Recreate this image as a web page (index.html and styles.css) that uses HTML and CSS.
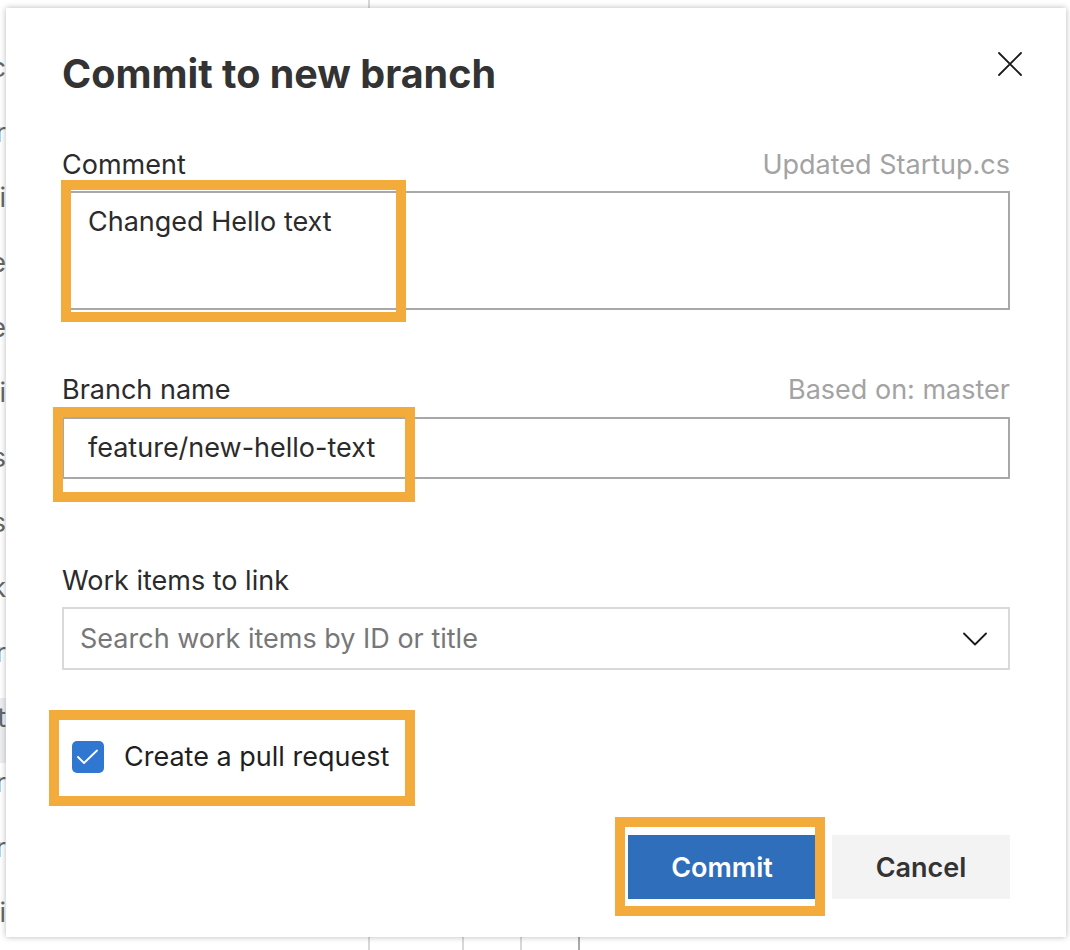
FILE: index.html
```html
<!DOCTYPE html>
<html lang="en">
<head>
<meta charset="utf-8">
<title>Commit to new branch</title>
<link rel="stylesheet" href="styles.css">
</head>
<body>
<div class="page">
  <div class="grid-lines">
    <div class="gcol gcol-1"></div>
    <div class="gcol gcol-2"></div>
    <div class="gcol gcol-3"></div>
    <div class="gcol gcol-4"></div>
  </div>
  <div class="side-text">
    <span class="frag">Sec</span>
    <span class="frag">Dir</span>
    <span class="frag">Acti</span>
    <span class="frag">Fle</span>
    <span class="frag">Ne</span>
    <span class="frag">Ui</span>
    <span class="frag">Ps</span>
    <span class="frag">Os</span>
    <span class="frag">Lk</span>
    <span class="frag">Fr</span>
    <span class="frag frag-sel">Ct</span>
    <span class="frag">Rr</span>
    <span class="frag">Or</span>
    <span class="frag">Si</span>
  </div>
</div>

<div class="dialog">
  <button class="close" aria-label="Close">
    <svg width="24" height="24" viewBox="0 0 24 24"><path d="M1 1 L23 23 M23 1 L1 23" stroke="#1a1a1a" stroke-width="1.8" fill="none" stroke-linecap="round"/></svg>
  </button>
  <h1 class="title">Commit to new branch</h1>

  <div class="field field-comment">
    <div class="label-row">
      <span class="label">Comment</span>
      <span class="hint">Updated Startup.cs</span>
    </div>
    <div class="textarea">Changed Hello text</div>
  </div>

  <div class="field field-branch">
    <div class="label-row">
      <span class="label">Branch name</span>
      <span class="hint">Based on: master</span>
    </div>
    <div class="input">feature/new-hello-text</div>
  </div>

  <div class="field field-work">
    <div class="label-row">
      <span class="label">Work items to link</span>
    </div>
    <div class="dropdown">
      <span class="placeholder">Search work items by ID or title</span>
      <svg class="chev" width="24" height="14" viewBox="0 0 24 14"><path d="M1 1.5 L12 12.5 L23 1.5" stroke="#1a1a1a" stroke-width="1.8" fill="none" stroke-linecap="round" stroke-linejoin="round"/></svg>
    </div>
  </div>

  <div class="check-row">
    <span class="checkbox">
      <svg width="32" height="32" viewBox="0 0 32 32"><path d="M6 16 L12 22 L25 9.5" stroke="#ffffff" stroke-width="1.8" fill="none" stroke-linecap="round" stroke-linejoin="round"/></svg>
    </span>
    <span class="check-label">Create a pull request</span>
  </div>

  <div class="actions">
    <button class="btn btn-primary">Commit</button>
    <button class="btn btn-secondary">Cancel</button>
  </div>

  <div class="mark mark-comment"></div>
  <div class="mark mark-branch"></div>
  <div class="mark mark-check"></div>
  <div class="mark mark-commit"></div>
</div>
</body>
</html>
```
FILE: styles.css
```css
* { box-sizing: border-box; }

html, body {
  margin: 0;
  padding: 0;
  width: 1070px;
  height: 950px;
  overflow: hidden;
  background: #ffffff;
  font-family: Inter, "Liberation Sans", Arial, sans-serif;
}

/* ---------- background page ---------- */
.page {
  position: relative;
  width: 1070px;
  height: 950px;
}

.grid-lines {
  display: flex;
  height: 950px;
}
.gcol { height: 100%; border-right: 2px solid #d8d8d8; }
.gcol-1 { width: 370px; }
.gcol-2 { width: 94px; border-image: linear-gradient(to bottom, transparent 900px, #d8d8d8 900px) 1; }
.gcol-3 { width: 58px; border-image: linear-gradient(to bottom, transparent 900px, #d8d8d8 900px) 1; }
.gcol-4 { width: 58px; border-image: linear-gradient(to bottom, transparent 900px, #a9a9a9 900px) 1; }

.side-text {
  position: absolute;
  left: 0;
  top: 0;
  display: flex;
  flex-direction: column;
  padding-top: 48px;
  width: 6px;
  overflow: hidden;
  direction: rtl;
}
.frag {
  display: block;
  height: 65px;
  line-height: 40px;
  font-size: 27px;
  color: #666;
  white-space: nowrap;
  text-align: right;
}
.frag-sel { background: #eceef2; }

/* ---------- dialog ---------- */
.dialog {
  position: absolute;
  left: 6px;
  top: 8px;
  width: 1060px;
  height: 929px;
  background: #ffffff;
  box-shadow: 0 0 6px rgba(0, 0, 0, 0.28);
  padding: 42px 56px 0 56px;
  display: flex;
  flex-direction: column;
  color: #323232;
}

.close {
  position: absolute;
  right: 44px;
  top: 44px;
  width: 24px;
  height: 24px;
  padding: 0;
  border: 0;
  background: transparent;
}
.close svg { display: block; }

.title {
  margin: 0;
  font-size: 39.5px;
  line-height: 48px;
  font-weight: 700;
  color: #333333;
}

.field { display: flex; flex-direction: column; }
.field-comment { margin-top: 51px; }
.field-branch { margin-top: 64px; }
.field-work { margin-top: 86px; }

.label-row {
  display: flex;
  justify-content: space-between;
  align-items: baseline;
  font-size: 27px;
  line-height: 32px;
}
.label { color: #2b2b2b; }
.hint { color: #a3a3a3; }

.textarea {
  margin-top: 10px;
  height: 119px;
  border: 2px solid #a8a8a8;
  padding: 13px 24px;
  font-size: 27px;
  line-height: 32px;
  color: #2b2b2b;
}

.input {
  margin-top: 11px;
  height: 62px;
  border: 2px solid #a8a8a8;
  padding: 13px 24px;
  font-size: 27px;
  line-height: 32px;
  color: #2b2b2b;
}

.dropdown {
  margin-top: 10px;
  height: 63px;
  border: 2px solid #d9d9d9;
  padding: 0 21px 0 16px;
  display: flex;
  align-items: center;
  justify-content: space-between;
  font-size: 27px;
  line-height: 32px;
}
.placeholder { color: #777777; }
.chev { display: block; }

.check-row {
  margin-top: 71px;
  margin-left: 10px;
  display: flex;
  align-items: center;
  gap: 20px;
  height: 32px;
}
.checkbox {
  width: 32px;
  height: 32px;
  border-radius: 5px;
  background: #2f77d0;
  display: block;
}
.checkbox svg { display: block; }
.check-label {
  font-size: 27px;
  line-height: 32px;
  color: #1f1f1f;
}

.actions {
  margin-top: 62px;
  display: flex;
  justify-content: flex-end;
  gap: 16px;
}
.btn {
  height: 64px;
  border: 0;
  font-family: Inter, "Liberation Sans", Arial, sans-serif;
  font-size: 27px;
  font-weight: 600;
  padding: 0;
}
.btn-primary {
  width: 188px;
  background: #2f6eba;
  color: #ffffff;
}
.btn-secondary {
  width: 178px;
  background: #f3f3f3;
  color: #333333;
}

/* ---------- orange annotation boxes ---------- */
.mark {
  position: absolute;
  border: 10px solid #f3ab3c;
  pointer-events: none;
}
.mark-comment { left: 55px; top: 172px; width: 345px; height: 142px; }
.mark-branch  { left: 47px; top: 399px; width: 362px; height: 95px; }
.mark-check   { left: 43px; top: 702px; width: 366px; height: 96px; }
.mark-commit  { left: 609px; top: 809px; width: 210px; height: 99px; }
```
